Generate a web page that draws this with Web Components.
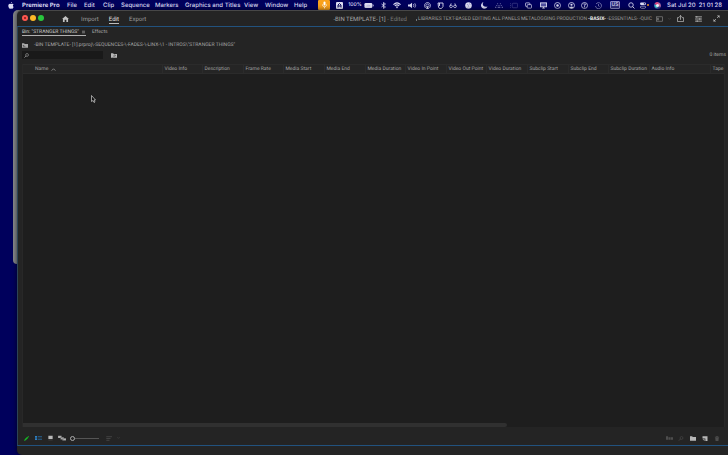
<!DOCTYPE html>
<html lang="en">
<head>
<meta charset="utf-8">
<title>Premiere Pro</title>
<style>
html,body{margin:0;height:100%;overflow:hidden}
body{background:#00005c;font-family:Inter,"Liberation Sans",sans-serif;text-rendering:geometricPrecision}
</style>
</head>
<body>
<mac-desktop></mac-desktop>
<script>
const ICONS = {
apple:['0 0 12 14','<path fill="currentColor" d="M8 0c.2 1.500-1 3-2.300 3C5.500 1.500 6.700.3 8 0zM9.800 7.300c0 1.700 1.500 2.300 1.600 2.400C11 11 9.800 13.500 8.400 13.500c-.8 0-1.200-.5-2.200-.5s-1.400.5-2.200.5C2.500 13.500.6 10.300.6 7.600.6 5 2.200 3.500 3.900 3.500c1 0 1.800.6 2.500.6.600 0 1.600-.7 2.800-.7.800 0 1.700.4 2.200 1.200-1 .6-1.600 1.500-1.600 2.700z"/>'],
mic:['0 0 12 16','<rect x="4" y="1" width="4" height="8" rx="2" fill="currentColor"/><path d="M2 7c0 6 8 6 8 0M6 12v3" fill="none" stroke="currentColor" stroke-width="1.500"/>'],
keyA:['0 0 14 14','<rect width="14" height="14" rx="2" fill="currentColor"/><path d="M4 11V6l3-3 3 3v5M4 8h6" fill="none" stroke="#10105c" stroke-width="2"/>'],
battery:['0 0 22 12','<rect width="19" height="12" rx="3" fill="currentColor"/><rect x="20" y="4" width="2" height="4" fill="currentColor"/><path d="M5 7h4V4m5 2h-3v3" stroke="#9a9acb" stroke-width="1" fill="none"/>'],
bluetooth:['0 0 10 14','<path d="M1 4l8 6-4 3V1l4 3-8 6" fill="none" stroke="currentColor" stroke-width="1.600"/>'],
wifi:['0 0 18 14','<path d="M1 5c5-5 11-5 16 0M4 8c3-3 7-3 10 0" fill="none" stroke="currentColor" stroke-width="2.400"/><path d="M6 10q3-2 6 0l-3 4z" fill="currentColor"/>'],
volume:['0 0 20 14','<path d="M0 5h4l5-4v12L4 9H0z" fill="currentColor"/><path d="M12 4q2 3 0 6M15 2q4 5 0 10" fill="none" stroke="currentColor" stroke-width="1.600"/>'],
airdrop:['0 0 14 14','<path d="M3 12C-2 5 4 1 7 1s9 4 4 11M5 10C2 6 5 4 7 4s5 2 2 6" fill="none" stroke="currentColor" stroke-width="1.500"/><path d="M7 7l3 7H4z" fill="currentColor"/>'],
shield:['0 0 12 14','<path d="M1 2h10v7l-3 4H4L2 10zM4 2v6" fill="none" stroke="currentColor" stroke-width="1.800"/>'],
glasses:['0 0 18 12','<path d="M2 8L5 1M16 8l-3-7M8 8q1-1 2 0" fill="none" stroke="currentColor" stroke-width="1.500"/><circle cx="4.500" cy="8" r="3" fill="none" stroke="currentColor" stroke-width="1.600"/><circle cx="13.500" cy="8" r="3" fill="none" stroke="currentColor" stroke-width="1.600"/>'],
globe:['0 0 16 16','<circle cx="8" cy="8" r="7.500" fill="currentColor"/><path d="M4 5l3 1 1 4-2 2M10 3l2 4" stroke="#7777b0" fill="none" stroke-width="1.200"/>'],
moon:['0 0 14 14','<path d="M5 0C1 5 5 11 13 9 10 16 0 14 0 7c0-3 2-6 5-7z" fill="currentColor"/>'],
dots:['0 0 18 12','<path d="M5 2h2m4 0h2M3 6h2m3 0h2m3 0h2M0 10h3m3 0h6m3 0h3" stroke="currentColor" stroke-width="2"/>'],
stage:['0 0 18 14','<path d="M1 2v2m0 2v2m0 2v2" stroke="currentColor" stroke-width="2"/><rect x="5" y="2" width="12" height="10" rx="2" fill="none" stroke="currentColor" stroke-width="1.500"/>'],
stack:['0 0 16 14','<rect x="1" y="1" width="10" height="8" rx="1.500" fill="none" stroke="currentColor" stroke-width="1.700"/><rect x="5" y="5" width="10" height="8" rx="1.500" fill="#00005c" stroke="currentColor" stroke-width="1.700"/>'],
display:['0 0 16 14','<rect x="1" y="1" width="14" height="9" fill="#5050a0" stroke="currentColor" stroke-width="2"/><path d="M5 13h6M8 10v3" stroke="currentColor" stroke-width="2"/>'],
target:['0 0 14 14','<circle cx="7" cy="7" r="6" fill="none" stroke="currentColor" stroke-width="1.500"/><circle cx="7" cy="7" r="2.500" fill="currentColor"/>'],
person:['0 0 14 14','<circle cx="7" cy="7" r="6" fill="none" stroke="currentColor" stroke-width="1.600"/><circle cx="7" cy="5.500" r="2.200" fill="currentColor"/><path d="M3 11q4-4 8 0l-4 2z" fill="currentColor"/>'],
help:['0 0 14 14','<circle cx="7" cy="7" r="6" fill="none" stroke="currentColor" stroke-width="1.500"/><path d="M5 4h4L7 8v3" fill="none" stroke="currentColor" stroke-width="1.500"/>'],
clock:['0 0 14 14','<path d="M2 4a6 6 0 1 1-1 4M7 4v4l2 1" fill="none" stroke="currentColor" stroke-width="1.400"/>'],
search:['0 0 14 14','<circle cx="6" cy="6" r="4.500" fill="none" stroke="currentColor" stroke-width="1.700"/><path d="M9 9l4 4" stroke="currentColor" stroke-width="2"/>'],
find:['0 0 14 14','<circle cx="8.500" cy="5.500" r="4" fill="none" stroke="currentColor" stroke-width="1.600"/><path d="M6 8l-5 5" stroke="currentColor" stroke-width="2"/>'],
control:['0 0 14 14','<rect y="0" width="14" height="6" rx="3" fill="currentColor"/><circle cx="10.500" cy="3" r="1.800" fill="#15156a"/><rect x="1" y="8.500" width="12" height="5" rx="2.500" fill="none" stroke="currentColor" stroke-width="1.500"/>'],
siri:['0 0 14 14','<circle cx="7" cy="7" r="7" fill="#3c3f8f"/><path d="M1 4q4-6 8-3L7 7z" fill="#e0457b"/><path d="M9 1q6 3 4 9L7 7z" fill="#d06a9c"/><path d="M1 5q-1 7 6 8V7z" fill="#36c3cf"/><circle cx="7" cy="7" r="3" fill="#f3f7ff"/>'],
home:['0 0 16 14','<path fill="currentColor" d="M8 0l8 7h-2v7h-4V9H6v5H2V7H0z"/>'],
workspace:['0 0 16 12','<rect x="1" y="1" width="14" height="10" fill="none" stroke="currentColor" stroke-width="1.500"/><path d="M3 3h3v6H3z" fill="currentColor"/>'],
share:['0 0 16 16','<path d="M5 6H1v9h14V6h-4M8 11V1M5 4l3-3 3 3" fill="none" stroke="currentColor" stroke-width="1.800"/>'],
settings:['0 0 16 14','<path d="M0 2h16M0 7h16M0 12h16" stroke="currentColor" stroke-width="2"/><path d="M4 0v4m7 1v4m-6 1v4" stroke="currentColor" stroke-width="2"/>'],
expand:['0 0 16 16','<path d="M9 1h6v6zM1 9v6h6z" fill="currentColor"/><path d="M14 2L9.500 6.500M6.500 9.500L2 14" stroke="currentColor" stroke-width="2"/>'],
menu:['0 0 10 10','<path d="M0 2h10M0 5h10M0 8h10" stroke="currentColor" stroke-width="1.200"/>'],
folderUp:['0 0 16 12','<path d="M0 0h6l1 2h9v10H0z" fill="currentColor"/><path d="M4 9V5m-2 2l2-2 2 2M4 9h5" fill="none" stroke="#333" stroke-width="1.300"/>'],
folderFind:['0 0 16 12','<path d="M0 0h6l1 2h9v10H0z" fill="currentColor"/><circle cx="10" cy="6" r="2" fill="none" stroke="#333" stroke-width="1.200"/><path d="M8 8l-3 3" stroke="#333" stroke-width="1.300"/>'],
folder:['0 0 16 12','<path d="M0 0h6l1 2h9v10H0z" fill="currentColor"/>'],
sortUp:['0 0 12 8','<path d="M1 7l5-5 5 5" fill="none" stroke="currentColor" stroke-width="2"/>'],
pencil:['0 0 14 14','<path d="M0 14l2-5 7-7 3 3-7 7zM10 1l2-1 2 2-1 2z" fill="currentColor"/>'],
list:['0 0 20 14','<path d="M0 1h6v5H0zM0 8h6v5H0z" fill="currentColor"/><path d="M8 3.500h12M8 10.500h12" stroke="currentColor" stroke-width="2"/>'],
thumbs:['0 0 14 14','<path d="M1 1h12v9H1z" fill="currentColor"/><path d="M1 12.500h12" stroke="currentColor" opacity=".5"/>'],
freeform:['0 0 22 14','<path d="M0 1h10v6H0zM7 5h9v6H7zM12 8h10v6H12z" fill="currentColor" stroke="#242424" stroke-width=".5"/>'],
sort:['0 0 18 14','<path d="M0 2h16M0 7h12M0 12h9" stroke="currentColor" stroke-width="1.600"/>'],
down:['0 0 8 6','<path d="M1 1l3 3 3-3" fill="none" stroke="currentColor" stroke-width="1.400"/>'],
sequence:['0 0 20 10','<path d="M0 0h6v10H0zM7 3h6v7H7zM14 3h6v7h-6z" fill="currentColor"/>'],
newItem:['0 0 14 14','<path d="M0 1h14v13H8V7H0z" fill="currentColor"/><path d="M0 9h6v5z" fill="currentColor"/>'],
trash:['0 0 12 14','<path d="M0 2h12v2H0zM4 0h4v2H4zM1 5h10l-1 9H2z" fill="currentColor"/>'],
cursor:['0 0 10 16','<path d="M1 1v12l3-2 2 4 2-1-2-4h3z" fill="#111" stroke="#ddd" stroke-width="1.300"/>']
};

class Base extends HTMLElement {
  connectedCallback() {
    if (this.shadowRoot) return;
    this.attachShadow({mode:'open'}).innerHTML = `<style>
      *{box-sizing:border-box}
      button,input{font:inherit;color:inherit;background:none;border:0;padding:0;margin:0;outline:0;text-rendering:inherit}
      button{display:flex;align-items:center;justify-content:center;white-space:nowrap}
    </style>` + this.view();
  }
}

customElements.define('ui-icon', class extends Base {
  view() {
    const [box, body] = ICONS[this.getAttribute('name')];
    return `<style>:host{display:block;flex:none;width:var(--w,7px);height:var(--h,6px)}svg{display:block;width:100%;height:100%}</style>
    <svg viewBox="${box}" aria-hidden="true">${body}</svg>`;
  }
});

customElements.define('icon-button', class extends Base {
  view() {
    return `<style>:host{display:flex;align-items:center;justify-content:center}</style>
    <button aria-label="${this.getAttribute('label')}"><ui-icon name="${this.getAttribute('icon')}"></ui-icon></button>`;
  }
});

customElements.define('mac-menubar', class extends Base {
  view() {
    const menus = ['Premiere Pro','File','Edit','Clip','Sequence','Markers','Graphics and Titles','View','Window','Help'];
    const icon = (n, l, s='') => `<icon-button icon="${n}" label="${l}" style="${s}"></icon-button>`;
    return `<style>
      :host{display:flex;height:10px;align-items:stretch;font-size:6px;font-weight:500;line-height:10px;color:#dcdcf2;background:#00005c}
      nav{display:grid;grid-template-columns:14px 45px 17px 19px 18px 34px 30px 59px 21px 29px 23px;padding-left:8px}
      nav button{justify-content:flex-start}
      nav button:nth-of-type(1){font-weight:700}
      nav icon-button{justify-content:flex-start;--w:6px;--h:7px}
      .status{display:grid;grid-template-columns:14px 16px 28px 16px 12px 18px 12px 14px 12px 18px 14px 16px 14px 14px 16px 13px 14px 13px 15px 18px 14px 13px 12px;--w:7px;--h:7px;margin-right:4px}
      .mic{background:#f9a11b;color:#fff;margin:0 1px;border-radius:1px;--h:8px}
      .pct{display:flex;align-items:center;justify-content:center;gap:2px;font-size:5px;--w:10px;--h:5px}
      .us{align-self:center;justify-self:center;padding:0 1px;border:1px solid #8888c4;border-radius:1px;background:#30307c;font-size:5px;line-height:6px}
      .cc{display:flex;align-items:center;justify-content:center;gap:1px;--w:6px}
      .cc i{width:2px;height:2px;border-radius:50%;background:#f39a1f}
      nav button,time{padding-top:1px}
      time{white-space:pre}
    </style>
    <nav>${icon('apple','Apple menu')}${menus.map(m=>`<button>${m}</button>`).join('')}</nav>
    <div class="status">
      <icon-button class="mic" icon="mic" label="Microphone"></icon-button>${icon('keyA','Input')}
      <span class="pct">100%<ui-icon name="battery"></ui-icon></span>
      ${icon('bluetooth','Bluetooth')}${icon('wifi','Wi-Fi','--w:8px')}${icon('volume','Volume','--w:9px')}${icon('airdrop','AirDrop')}${icon('shield','Shield')}${icon('glasses','Reader','--w:8px')}${icon('globe','Globe')}${icon('moon','Focus')}${icon('dots','Dots','opacity:.6;--w:8px')}${icon('stage','Stage','opacity:.3;--w:8px')}${icon('stack','Windows')}${icon('display','Display')}${icon('target','Target')}${icon('person','User')}${icon('help','Help')}${icon('clock','Time Machine','opacity:.65')}
      <span class="us">US</span>${icon('search','Spotlight')}<span class="cc"><ui-icon name="control"></ui-icon><i></i></span>${icon('siri','Siri')}
    </div><time>Sat Jul 20  21 01 28</time>`;
  }
});

customElements.define('title-bar', class extends Base {
  view() {
    const spaces = ['LIBRARIES','TEXT-BASED EDITING','ALL PANELS','METALOGGING','PRODUCTION','-BASIX-','-ESSENTIALS-','-QUIC'];
    return `<style>
      :host{display:flex;align-items:center;height:15px;font-size:5px;line-height:7px;color:#9b9b9b}
      .lights{display:flex;gap:2px;padding:0 0 1px 5px}
      .lights button{width:6px;height:6px;border-radius:50%;background:var(--c)}
      .lights i{width:2px;height:2px;border-radius:50%;background:#7c1714}
      nav{display:flex;gap:10px;padding-left:18px;font-size:6px;--w:7px;--h:6px;align-items:center}
      nav icon-button{color:#c2c2c2;margin-right:2px}
      nav button{border-bottom:1px solid transparent;line-height:7px;padding-top:2px}
      nav .on{color:#e2e2e2;border-color:#bdbdbd}
      h1{flex:1;margin:0;padding-top:2px;text-align:right;font-size:6px;font-weight:400;white-space:nowrap;color:#a6a6a6}
      h1 span{color:#777}
      .spaces{display:flex;justify-content:space-between;margin-left:9px;width:236px;padding-top:2px;align-items:center}
      .spaces i{flex:none;width:1px;height:2px;background:#777}
      .spaces .on{color:#f2f2f2;font-weight:700}
      .tools{display:grid;grid-template-columns:14px 6px 16px 20px 16px;color:#b5b5b5;--w:7px;--h:7px;padding-right:4px}
    </style>
    <div class="lights"><button aria-label="Close" style="--c:#fd5750"><i></i></button><button aria-label="Minimise" style="--c:#fcb827"></button><button aria-label="Zoom" style="--c:#29c63d"></button></div>
    <nav><icon-button icon="home" label="Home"></icon-button><button>Import</button><button class="on">Edit</button><button>Export</button></nav>
    <h1>-BIN TEMPLATE- [1] <span>- Edited</span></h1>
    <div class="spaces"><i></i>${spaces.map(s=>`<button${s==='-BASIX-'?' class="on"':''}>${s}</button>`).join('')}</div>
    <div class="tools"><icon-button icon="workspace" label="Workspaces" style="--h:6px;color:#888"></icon-button><icon-button icon="down" label="More" style="--w:3px;--h:2px;color:#666"></icon-button><icon-button icon="share" label="Share"></icon-button><icon-button icon="settings" label="Settings" style="--h:6px"></icon-button><icon-button icon="expand" label="Full screen"></icon-button></div>`;
  }
});

customElements.define('bin-table', class extends Base {
  view() {
    const cols = [['Video Info',40],['Description',41],['Frame Rate',40],['Media Start',41],['Media End',41],['Media Duration',40],['Video In Point',41],['Video Out Point',40],['Video Duration',41],['Subclip Start',41],['Subclip End',40],['Subclip Duration',41],['Audio Info',61],['Tape',0]];
    return `<style>
      :host{display:flex;flex-direction:column;flex:1;min-height:0;background:#1e1e1e;border:1px solid #282828;border-width:0 1px}
      table{table-layout:fixed;width:100%;border-collapse:collapse;font-size:5px;line-height:7px;color:#a2a2a2;background:#252525}
      th{height:9px;padding:0 0 0 2px;font-weight:400;text-align:left;white-space:nowrap;border:1px solid #2b2b2b;border-width:1px 0 1px 1px}
      th:first-child,th:nth-child(2){border-left:0}
      th:nth-child(2){padding-left:1px}
      th span{display:flex;align-items:center;gap:3px;--w:5px;--h:3px}
      main{flex:1}
      .track{height:4px}
      .thumb{width:69%;height:4px;border-radius:0 2px 2px 0;background:#303030}
    </style>
    <table><colgroup><col style="width:11px"><col style="width:128px">${cols.map(c=>`<col${c[1]?` style="width:${c[1]}px"`:''}>`).join('')}</colgroup>
    <thead><tr><th></th><th><span>Name<ui-icon name="sortUp"></ui-icon></span></th>${cols.map(c=>`<th>${c[0]}</th>`).join('')}</tr></thead></table>
    <main></main><div class="track"><div class="thumb"></div></div>`;
  }
});

customElements.define('bin-panel', class extends Base {
  view() {
    return `<style>
      :host{display:flex;flex-direction:column;flex:1;min-height:0;border:1px solid #22527e;border-left-color:#2c4456;border-right:0;padding:0 3px 0 4px;font-size:5px;line-height:7px;color:#a8a8a8}
      .tabs{display:flex;gap:6px;height:10px}
      .tabs button{padding:2px 1px 0 0;height:9px}
      .tabs .on{border-bottom:1px solid #b0b0b0;color:#d0d0d0;gap:3px;--w:3px;--h:4px}
      .path{display:flex;align-items:center;gap:6px;height:14px;padding-top:2px;--w:6px;--h:5px}
      .find{display:flex;align-items:center;height:8px;margin-bottom:5px}
      label{display:flex;align-items:center;gap:2px;width:81px;height:8px;padding-left:2px;background:#191919;--w:5px;--h:5px}
      input{flex:1;min-width:0}
      .find>icon-button{margin-left:8px;--w:6px;--h:5px;color:#b8b8b8}
      .find output{margin-left:auto;margin-right:-1px}
      footer{display:flex;align-items:center;height:18px;padding:4px 4px 0 0;color:#b8b8b8}
      .views{display:grid;grid-template-columns:8px 16px 8px 16px;--h:6px}
      input[type=range]{appearance:none;flex:none;width:29px;height:6px;background:linear-gradient(#555,#555) center/100% 1px no-repeat}
      input[type=range]::-webkit-slider-thumb{appearance:none;width:5px;height:5px;border:1px solid #aaa;border-radius:50%;background:#242424}
      .sort{display:flex;gap:4px;margin-left:7px;color:#5a5a5a}
      .acts{display:grid;grid-template-columns:repeat(5,12px);margin-left:auto;margin-right:-2px;--w:6px;--h:5px}
      .off{color:#4d4d4d}
    </style>
    <div class="tabs"><button class="on">Bin: "STRANGER THINGS"<ui-icon name="menu"></ui-icon></button><button>Effects</button></div>
    <div class="path"><ui-icon name="folderUp"></ui-icon><span>-BIN TEMPLATE- [1].prproj\\-SEQUENCES-\\-FADES-\\-LINX-\\1 - INTROS\\"STRANGER THINGS"</span></div>
    <div class="find"><label><ui-icon name="find"></ui-icon><input type="text" aria-label="Search bin"></label><icon-button icon="folderFind" label="Search in bin"></icon-button><output>0 items</output></div>
    <bin-table></bin-table>
    <footer><div class="views">
      <icon-button icon="pencil" label="Writable" style="--w:5px;--h:5px;color:#16b824"></icon-button><icon-button icon="list" label="List view" style="color:#2b7fc4"></icon-button><icon-button icon="thumbs" label="Icon view" style="--w:5px"></icon-button><icon-button icon="freeform" label="Freeform view" style="--w:8px"></icon-button></div>
      <input type="range" aria-label="Zoom" value="0">
      <div class="sort"><icon-button icon="sort" label="Sort" style="--h:5px"></icon-button><icon-button icon="down" label="Sort options" style="--w:3px;--h:2px"></icon-button></div>
      <div class="acts"><icon-button class="off" icon="sequence" label="Automate to sequence" style="--w:7px;--h:4px"></icon-button><icon-button class="off" icon="find" label="Find"></icon-button><icon-button icon="folder" label="New bin"></icon-button><icon-button icon="newItem" label="New item"></icon-button><icon-button class="off" icon="trash" label="Delete"></icon-button></div>
    </footer>`;
  }
});

customElements.define('premiere-window', class extends Base {
  view() {
    return `<style>
      :host{display:flex;flex-direction:column;background:#242424;border-top:1px solid #474747;border-radius:5px 0 0 5px;font-family:"Liberation Sans Narrow",Roboto,"Open Sans",sans-serif;font-family:Roboto,"Open Sans",sans-serif;overflow:hidden;box-shadow:0 0 5px #000a}
      .foot{height:9px}
    </style><title-bar></title-bar><bin-panel></bin-panel><div class="foot"></div>`;
  }
});

customElements.define('mac-desktop', class extends Base {
  view() {
    return `<style>
      :host{display:flex;flex-direction:column;height:100vh;background:#00005c;position:relative}
      .area{flex:1;min-height:0;display:grid;padding-left:13px}
      .back,premiere-window{grid-area:1/1}
      .back{height:57%;background:#85868a;border-radius:5px 0 0 4px}
      premiere-window{margin-left:4px;min-height:0}
      .pointer{position:absolute;left:91px;top:95px;--w:5px;--h:8px}
    </style><mac-menubar></mac-menubar><div class="area"><div class="back"></div><premiere-window></premiere-window></div><ui-icon class="pointer" name="cursor"></ui-icon>`;
  }
});
</script>
</body>
</html>
